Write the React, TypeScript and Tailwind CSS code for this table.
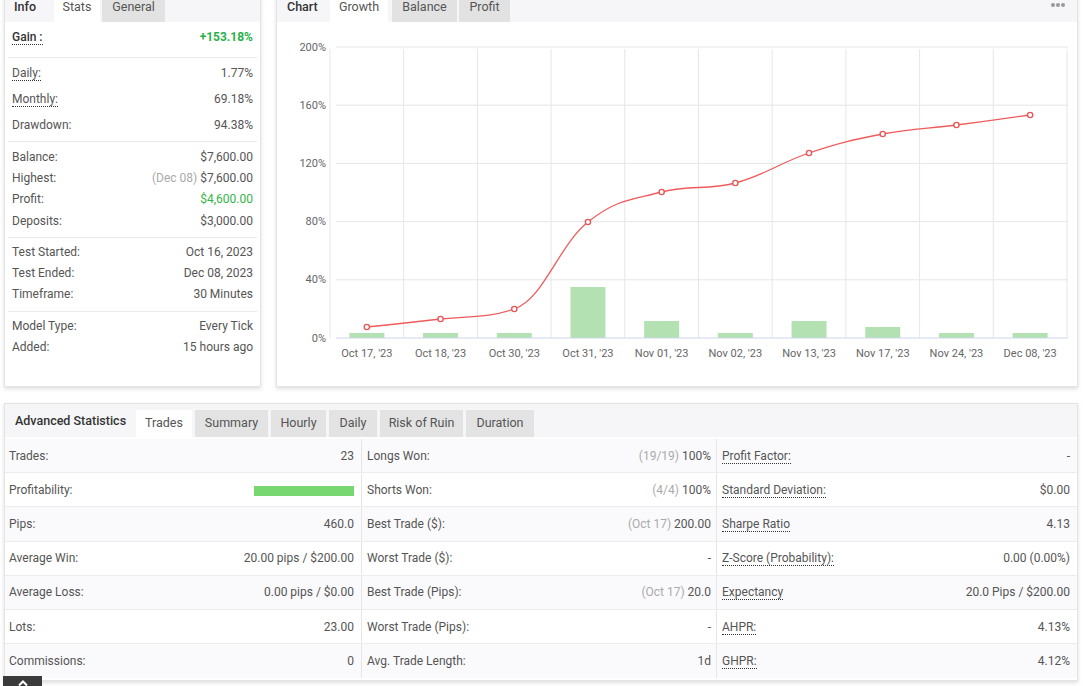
import React from "react";

type Pt = { x: number; y: number };

const font = { fontFamily: "Roboto, 'Liberation Sans', sans-serif" };

// highcharts-like spline
function splinePath(pts: Pt[]) {
  const s = 1.5;
  const d = s + 1;
  const ctl = pts.map((p, i) => {
    if (i === 0 || i === pts.length - 1) return { lx: p.x, ly: p.y, rx: p.x, ry: p.y };
    const a = pts[i - 1];
    const b = pts[i + 1];
    const lx = (s * p.x + a.x) / d;
    let ly = (s * p.y + a.y) / d;
    const rx = (s * p.x + b.x) / d;
    let ry = (s * p.y + b.y) / d;
    const corr = ((ry - ly) * (rx - p.x)) / (rx - lx) + p.y - ry;
    ly += corr;
    ry += corr;
    if (ly > a.y && ly > p.y) {
      ly = Math.max(a.y, p.y);
      ry = 2 * p.y - ly;
    } else if (ly < a.y && ly < p.y) {
      ly = Math.min(a.y, p.y);
      ry = 2 * p.y - ly;
    }
    if (ry > b.y && ry > p.y) {
      ry = Math.max(b.y, p.y);
      ly = 2 * p.y - ry;
    } else if (ry < b.y && ry < p.y) {
      ry = Math.min(b.y, p.y);
      ly = 2 * p.y - ry;
    }
    return { lx, ly, rx, ry };
  });
  let out = `M ${pts[0].x} ${pts[0].y}`;
  for (let i = 1; i < pts.length; i++) {
    const c0 = ctl[i - 1];
    const c1 = ctl[i];
    out += ` C ${c0.rx} ${c0.ry} ${c1.lx} ${c1.ly} ${pts[i].x} ${pts[i].y}`;
  }
  return out;
}

const cats = [
  { label: "Oct 17, '23", y: 326, bar: 5 },
  { label: "Oct 18, '23", y: 318, bar: 5 },
  { label: "Oct 30, '23", y: 308, bar: 5 },
  { label: "Oct 31, '23", y: 221, bar: 51 },
  { label: "Nov 01, '23", y: 191, bar: 17 },
  { label: "Nov 02, '23", y: 182, bar: 5 },
  { label: "Nov 13, '23", y: 152, bar: 17 },
  { label: "Nov 17, '23", y: 133, bar: 11 },
  { label: "Nov 24, '23", y: 124, bar: 5 },
  { label: "Dec 08, '23", y: 114, bar: 5 },
];

const X0 = 330;
const STEP = 73.7;
const BASE = 337;

function GrowthChart() {
  const pts = cats.map((c, i) => ({ x: X0 + STEP * (i + 0.5), y: c.y }));
  const yTicks = ["0%", "40%", "80%", "120%", "160%", "200%"];
  return (
    <svg width="800" height="366" viewBox="277 21 800 366" className="block">
      {yTicks.map((t, i) => {
        const y = BASE - i * 58.2;
        return (
          <g key={t}>
            {i > 0 && <line x1={336} x2={1068} y1={y} y2={y} stroke="#e6e6e6" strokeWidth="1" />}
            <text x={326} y={y + 3.5} textAnchor="end" fontSize="11" fill="#666" style={font}>
              {t}
            </text>
          </g>
        );
      })}
      {Array.from({ length: 11 }).map((_, i) => (
        <line key={i} x1={X0 + STEP * i} x2={X0 + STEP * i} y1={48} y2={BASE} stroke="#e6e6e6" strokeWidth="1" />
      ))}
      {cats.map((c, i) => (
        <rect key={c.label} x={X0 + STEP * (i + 0.5) - 17.5} y={BASE - c.bar} width={35} height={c.bar} fill="#b3e1b1" />
      ))}
      <line x1={336} x2={1068} y1={BASE} y2={BASE} stroke="#ccd6eb" strokeWidth="1" />
      <path d={splinePath(pts)} fill="none" stroke="#ef5b5b" strokeWidth="1.3" />
      {pts.map((p, i) => (
        <circle key={i} cx={p.x} cy={p.y} r={2.6} fill="#fff" stroke="#e8575b" strokeWidth="1.4" />
      ))}
      {cats.map((c, i) => (
        <text key={c.label} x={X0 + STEP * (i + 0.5)} y={355.5} textAnchor="middle" fontSize="11" fill="#666" style={font}>
          {c.label}
        </text>
      ))}
    </svg>
  );
}

function Dotted({ children }: { children: React.ReactNode }) {
  return <span className="border-b border-dotted border-[#333] leading-[14px]">{children}</span>;
}

function Row({ label, value, h = "h-[21px]" }: { label: React.ReactNode; value: React.ReactNode; h?: string }) {
  return (
    <div className={`flex items-center justify-between px-[4px] ${h}`}>
      <span>{label}</span>
      <span>{value}</span>
    </div>
  );
}

function InfoPanel() {
  return (
    <div className="w-[257px] h-[396px] bg-white border border-[#e4e4e4] shadow-[0_2px_4px_rgba(0,0,0,0.13)] text-[12px] text-[#555]">
      <div className="flex items-end h-[30px] bg-[#f6f6f8] gap-[2px]">
        <div className="w-[47px] h-full flex items-center pl-[9px] font-medium text-[#333] text-[12.5px]">Info</div>
        <div className="w-[46px] h-full flex items-center justify-center bg-white text-[12.5px]">Stats</div>
        <div className="w-[63px] h-full flex items-center justify-center bg-[#e2e2e2] text-[12.5px]">General</div>
      </div>
      <div className="mx-[3px] border-b border-[#ebebeb] h-[36px] pt-[5px]">
        <div className="flex items-center justify-between px-[4px] h-[20px]">
          <span className="font-medium text-[#333]">
            <Dotted>Gain :</Dotted>
          </span>
          <span className="font-bold text-[#28b14a]">+153.18%</span>
        </div>
      </div>
      <div className="mx-[3px] border-b border-[#ebebeb] pt-[2px] pb-[3px]">
        <Row h="h-[26px]" label={<Dotted>Daily:</Dotted>} value="1.77%" />
        <Row h="h-[26px]" label={<Dotted>Monthly:</Dotted>} value="69.18%" />
        <Row h="h-[26px]" label="Drawdown:" value="94.38%" />
      </div>
      <div className="mx-[3px] border-b border-[#ebebeb] pt-[4px] pb-[6px]">
        <Row h="h-[21.3px]" label="Balance:" value="$7,600.00" />
        <Row
          h="h-[21.3px]"
          label="Highest:"
          value={
            <>
              <span className="text-[#aaa]">(Dec 08)</span> $7,600.00
            </>
          }
        />
        <Row h="h-[21.3px]" label="Profit:" value={<span className="text-[#33b54b]">$4,600.00</span>} />
        <Row h="h-[21.3px]" label="Deposits:" value="$3,000.00" />
      </div>
      <div className="mx-[3px] border-b border-[#ebebeb] pt-[3px] pb-[7px]">
        <Row label="Test Started:" value="Oct 16, 2023" />
        <Row label="Test Ended:" value="Dec 08, 2023" />
        <Row label="Timeframe:" value="30 Minutes" />
      </div>
      <div className="mx-[3px] pt-[3px]">
        <Row label="Model Type:" value="Every Tick" />
        <Row label="Added:" value="15 hours ago" />
      </div>
    </div>
  );
}

function ChartPanel() {
  return (
    <div className="w-[802px] h-[396px] bg-white border border-[#e4e4e4] shadow-[0_2px_4px_rgba(0,0,0,0.13)] text-[#555]">
      <div className="relative flex items-end h-[30px] bg-[#f6f6f8] text-[12.5px]">
        <div className="w-[53px] h-full flex items-center pl-[10px] font-medium text-[#333]">Chart</div>
        <div className="w-[58px] h-full flex items-center justify-center bg-white">Growth</div>
        <div className="w-[65px] h-full flex items-center justify-center bg-[#e2e2e2] ml-[4px]">Balance</div>
        <div className="w-[51px] h-full flex items-center justify-center bg-[#e2e2e2] ml-[2px]">Profit</div>
        <div className="absolute right-[12px] top-[11px] flex gap-[1px]">
          <span className="w-[4px] h-[4px] rounded-full bg-[#999]" />
          <span className="w-[4px] h-[4px] rounded-full bg-[#999]" />
          <span className="w-[4px] h-[4px] rounded-full bg-[#999]" />
        </div>
      </div>
      <GrowthChart />
    </div>
  );
}

type Cell = { label: React.ReactNode; value: React.ReactNode };

const muted = (t: string) => <span className="text-[#aaa]">{t}</span>;

const rows: Cell[][] = [
  [
    { label: "Trades:", value: "23" },
    { label: "Longs Won:", value: <>{muted("(19/19)")} 100%</> },
    { label: <Dotted>Profit Factor:</Dotted>, value: "-" },
  ],
  [
    { label: "Profitability:", value: <span className="inline-block w-[100px] h-[10px] bg-[#79d771] align-middle" /> },
    { label: "Shorts Won:", value: <>{muted("(4/4)")} 100%</> },
    { label: <Dotted>Standard Deviation:</Dotted>, value: "$0.00" },
  ],
  [
    { label: "Pips:", value: "460.0" },
    { label: "Best Trade ($):", value: <>{muted("(Oct 17)")} 200.00</> },
    { label: <Dotted>Sharpe Ratio</Dotted>, value: "4.13" },
  ],
  [
    { label: "Average Win:", value: "20.00 pips / $200.00" },
    { label: "Worst Trade ($):", value: "-" },
    { label: <Dotted>Z-Score (Probability):</Dotted>, value: "0.00 (0.00%)" },
  ],
  [
    { label: "Average Loss:", value: "0.00 pips / $0.00" },
    { label: "Best Trade (Pips):", value: <>{muted("(Oct 17)")} 20.0</> },
    { label: <Dotted>Expectancy</Dotted>, value: "20.0 Pips / $200.00" },
  ],
  [
    { label: "Lots:", value: "23.00" },
    { label: "Worst Trade (Pips):", value: "-" },
    { label: <Dotted>AHPR:</Dotted>, value: "4.13%" },
  ],
  [
    { label: "Commissions:", value: "0" },
    { label: "Avg. Trade Length:", value: "1d" },
    { label: <Dotted>GHPR:</Dotted>, value: "4.12%" },
  ],
];

function AdvancedPanel() {
  const tabs = [
    { t: "Summary", w: "w-[73px]" },
    { t: "Hourly", w: "w-[55px]" },
    { t: "Daily", w: "w-[48px]" },
    { t: "Risk of Ruin", w: "w-[83px]" },
    { t: "Duration", w: "w-[68px]" },
  ];
  return (
    <div className="w-[1074px] bg-white border border-[#e4e4e4] shadow-[0_2px_4px_rgba(0,0,0,0.13)] text-[12px] text-[#555]">
      <div className="flex items-end h-[33px] bg-[#f6f6f8] gap-[3px] text-[12.5px]">
        <div className="w-[128px] h-full flex items-center pt-[1px] pl-[10px] font-medium text-[#333]">Advanced Statistics</div>
        <div className="w-[56px] h-[27px] flex items-center justify-center bg-white">Trades</div>
        {tabs.map((x) => (
          <div key={x.t} className={`${x.w} h-[27px] flex items-center justify-center bg-[#e3e3e3]`}>
            {x.t}
          </div>
        ))}
      </div>
      <div className="pt-[2px] pb-[2px]">
        {rows.map((r, i) => (
          <div
            key={i}
            className={`grid grid-cols-[357px_355px_1fr] h-[34.2px] ${i < rows.length - 1 ? "border-b border-[#ececec]" : ""} ${
              i % 2 === 0 ? "bg-[#fafafc]" : "bg-white"
            }`}
          >
            <div className="flex items-center justify-between pl-[4px] pr-[7px] border-r border-[#e6e6e6]">
              <span>{r[0].label}</span>
              <span>{r[0].value}</span>
            </div>
            <div className="flex items-center justify-between pl-[5px] pr-[5px] border-r border-[#e6e6e6]">
              <span>{r[1].label}</span>
              <span>{r[1].value}</span>
            </div>
            <div className="flex items-center justify-between pl-[5px] pr-[7px]">
              <span>{r[2].label}</span>
              <span>{r[2].value}</span>
            </div>
          </div>
        ))}
      </div>
    </div>
  );
}

export default function App() {
  return (
    <div className="relative w-[1084px] h-[686px] overflow-hidden bg-white" style={font}>
      <div className="flex gap-[15px] pl-[4px] mt-[-9px]">
        <InfoPanel />
        <ChartPanel />
      </div>
      <div className="pl-[4px] mt-[16px]">
        <AdvancedPanel />
      </div>
      <button className="absolute left-[3px] top-[676px] w-[39px] h-[22px] bg-[#3b3b3b] flex justify-center pt-[4px]">
        <svg width="10" height="6" viewBox="0 0 10 6">
          <path d="M1 5.5 L5 1.5 L9 5.5" fill="none" stroke="#fff" strokeWidth="2" />
        </svg>
      </button>
    </div>
  );
}
